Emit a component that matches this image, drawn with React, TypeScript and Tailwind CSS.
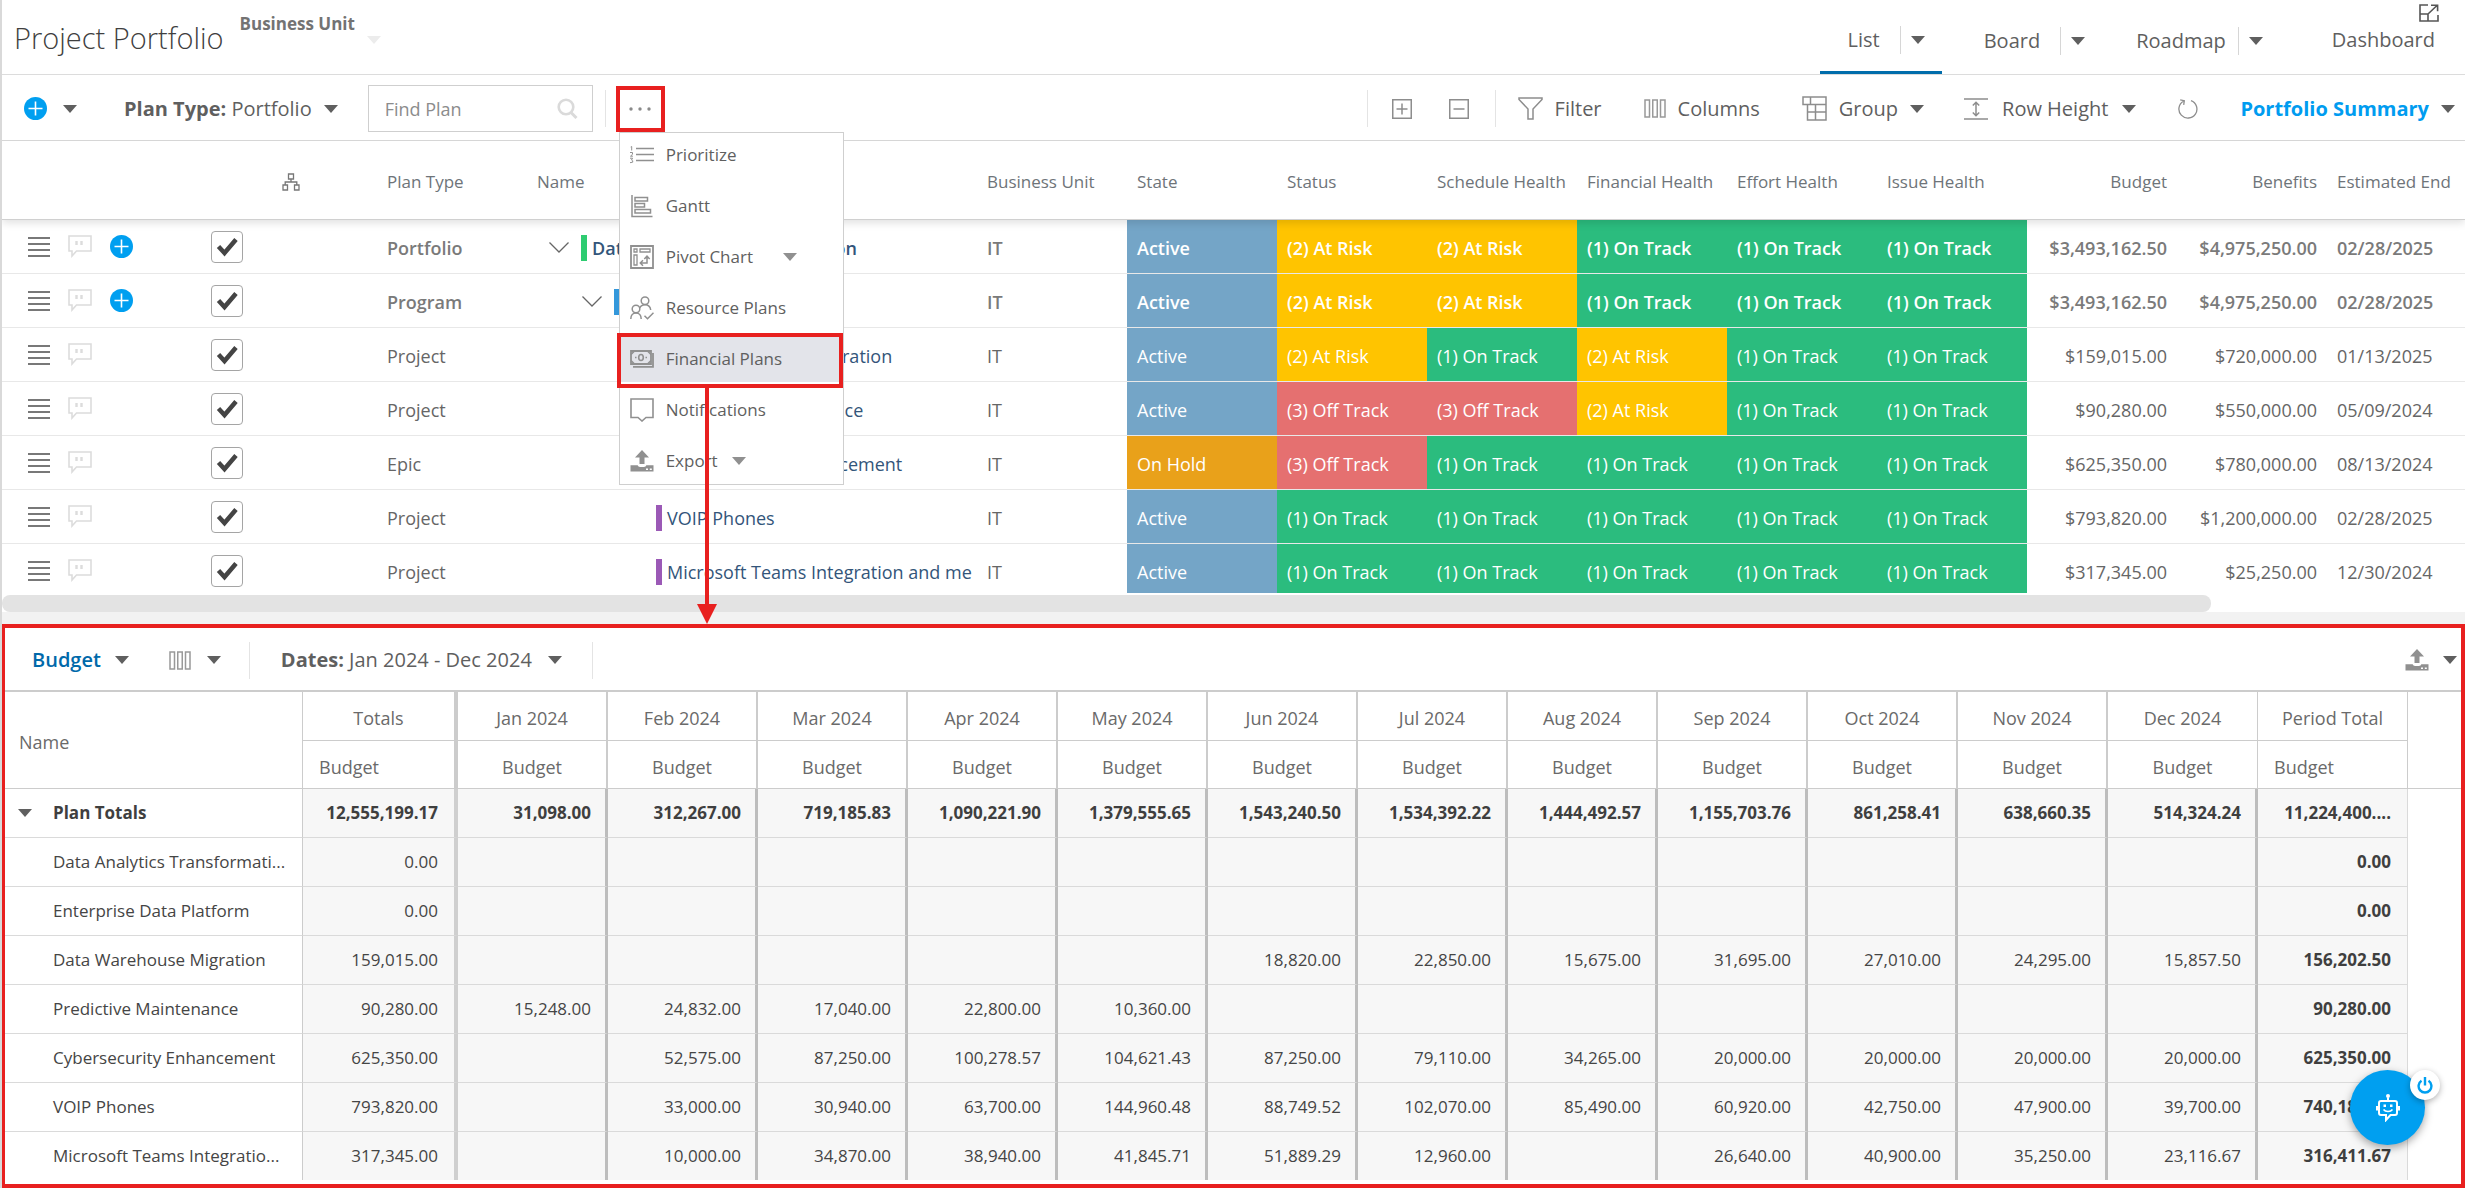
import React from "react";

type IconProps = { className?: string };

const Caret = ({ className = "text-[#5f5f5f]" }: IconProps) => (
  <svg width="14" height="8" viewBox="0 0 14 8" className={"shrink-0 " + className} aria-hidden="true">
    <path d="M0 0h14L7 8z" fill="currentColor" />
  </svg>
);

const PlusCircle = () => (
  <svg width="23" height="23" viewBox="0 0 23 23" className="shrink-0" aria-hidden="true">
    <circle cx="11.5" cy="11.5" r="11.5" fill="#009ff0" />
    <path d="M11.5 4.5v14M4.5 11.5h14" stroke="#fff" strokeWidth="1.6" />
  </svg>
);

const SearchIcon = () => (
  <svg width="21" height="21" viewBox="0 0 21 21" fill="none" stroke="#dadada" strokeWidth="2.6" aria-hidden="true">
    <circle cx="9" cy="9" r="7.3" />
    <path d="M14 14.5l5.5 5.5" strokeWidth="3" />
  </svg>
);

const ExpandIcon = () => (
  <svg width="20" height="18" viewBox="0 0 20 18" fill="none" stroke="#555" strokeWidth="1.6" aria-hidden="true">
    <path d="M9 1H1v16h18v-6M1 10h8v7M9 10l9-8.5M12 1.2h6.6v6" />
  </svg>
);

const BoxIcon = ({ plus }: { plus?: boolean }) => (
  <svg width="20" height="20" viewBox="0 0 20 20" fill="none" stroke="#8d8d8d" aria-hidden="true">
    <rect x="0.75" y="0.75" width="18.5" height="18.5" strokeWidth="1.5" />
    <path d={plus ? "M10 4.5v11M4.5 10h11" : "M4.5 10h11"} strokeWidth="1.5" />
  </svg>
);

const FilterIcon = () => (
  <svg width="25" height="23" viewBox="0 0 25 23" fill="none" stroke="#8d8d8d" strokeWidth="1.5" aria-hidden="true">
    <path d="M1 1h23v1.5L15 12v10h-5V12L1 2.5z" />
  </svg>
);

const ColumnsIcon = () => (
  <svg width="22" height="19" viewBox="0 0 22 19" fill="none" stroke="#999" strokeWidth="1.5" aria-hidden="true">
    <path d="M1 1h4.5v17H1zM8.75 1h4.5v17h-4.5zM16.5 1H21v17h-4.5z" />
  </svg>
);

const GroupIcon = () => (
  <svg width="25" height="25" viewBox="0 0 25 25" fill="none" stroke="#8d8d8d" strokeWidth="1.5" aria-hidden="true">
    <path d="M1 1h23v23H5.5V8.5H1zM8.5 1v7.5M5.5 8.5H24M5.5 16H24M13.5 8.5V24" />
  </svg>
);

const RowHeightIcon = () => (
  <svg width="24" height="22" viewBox="0 0 24 22" fill="none" stroke="#8d8d8d" strokeWidth="1.5" aria-hidden="true">
    <path d="M0 1h24M0 21h24M12 4.5v13M8.8 7.5L12 4.3l3.2 3.2M8.8 14.5l3.2 3.2 3.2-3.2" />
  </svg>
);

const RefreshIcon = () => (
  <svg width="20" height="21" viewBox="0 0 20 21" fill="none" stroke="#8d8d8d" strokeWidth="1.3" aria-hidden="true">
    <path d="M13 2.6a9 9 0 1 1-7.5.6M2.2 1.8l4.1.9-.6 4.2" />
  </svg>
);

const HierarchyIcon = () => (
  <svg width="18" height="18" viewBox="0 0 18 18" fill="none" stroke="#777" strokeWidth="1.3" aria-hidden="true">
    <path d="M6.5 1h5v5h-5zM1 12h4.5v5H1zM12.5 12H17v5h-4.5zM9 6v3M3.2 12V9h11.6v3" />
  </svg>
);

const RowsIcon = () => (
  <svg width="22" height="20" viewBox="0 0 22 20" stroke="#4c4c4c" strokeWidth="1.7" aria-hidden="true">
    <path d="M0 1h22M0 7h22M0 13h22M0 19h22" />
  </svg>
);

const CommentIcon = () => (
  <svg width="24" height="23" viewBox="0 0 24 23" fill="none" stroke="#dcdcdc" strokeWidth="1.6" aria-hidden="true">
    <path d="M1 1h22v15H8.5L4 21v-5H1z" />
    <path d="M8.5 6v4M13.5 6v4" strokeWidth="2.4" />
  </svg>
);

const ChevronDown = () => (
  <svg width="20" height="11" viewBox="0 0 20 11" fill="none" stroke="#666" strokeWidth="1.3" aria-hidden="true">
    <path d="M0.5 0.5L10 10l9.5-9.5" />
  </svg>
);

const UploadIcon = () => (
  <svg width="24" height="22" viewBox="0 0 24 22" fill="#909090" aria-hidden="true">
    <path d="M12 0l7 7.5h-4.5V14h-5V7.5H5z" />
    <path d="M0.5 15.2h7.2c.6 1.5 1.6 1.8 4.3 1.8s3.700-.3 4.300-1.800h7.200V21.500H.5z" />
    <path d="M16 18.500h2v1.500h-2zM19.800 18.500h2v1.500h-2z" fill="#fff" />
  </svg>
);

const PrioritizeIcon = () => (
  <svg width="24" height="18" viewBox="0 0 24 18" fill="none" stroke="#909090" aria-hidden="true">
    <path d="M6 2.500h18M6 8.500h18M6 14.500h18" strokeWidth="1.600" />
    <path d="M0.700 1l1-.5V4.500M0 6.500h2.500v1.800L.5 10.200h2.400M0 12.200h2.600L1.500 14l1.200.8v1.400L0 16.700" strokeWidth="1" />
  </svg>
);

const GanttIcon = () => (
  <svg width="24" height="24" viewBox="0 0 24 24" fill="none" stroke="#909090" strokeWidth="1.500" aria-hidden="true">
    <path d="M2 1v21.500h20.500M5 3.500h12.500v3.500H5zM5 9.500h9.500V13H5zM5 15.500h15.500V19H5z" />
  </svg>
);

const PivotIcon = () => (
  <svg width="24" height="24" viewBox="0 0 24 24" fill="none" stroke="#909090" strokeWidth="1.500" aria-hidden="true">
    <path d="M1 1h22v22H1z" strokeWidth="1.800" />
    <path d="M4 4h3v3H4zM10 4h10v3H10zM4 10h3v10H4z" strokeWidth="1.300" />
    <path d="M10.500 18H17V11.500M13 15.300L10.300 18l2.700 2.700M14.300 14L17 11.200l2.700 2.800" />
  </svg>
);

const PeopleIcon = () => (
  <svg width="24" height="24" viewBox="0 0 24 24" fill="none" stroke="#909090" strokeWidth="1.500" aria-hidden="true">
    <circle cx="15" cy="4.700" r="3.800" />
    <circle cx="6" cy="13" r="3.800" />
    <path d="M.8 23c0-3.700 2.200-6 5.200-6s5.200 2.300 5.200 6M9.700 12c1-2.100 2.900-3.300 5.300-3.300 3.400 0 5.300 2 5.700 5.300M14.500 19.800l3 3 6-6" />
  </svg>
);

const MoneyIcon = () => (
  <svg width="24" height="18" viewBox="0 0 24 18" fill="none" stroke="#909090" aria-hidden="true">
    <path d="M1 1h20v13H1zM3 16.800h20V3" strokeWidth="1.800" />
    <path d="M1 4.500L4.500 1M17.500 1L21 4.500M1 10.500L4.500 14M17.500 14l3.500-3.500" strokeWidth="1.600" />
    <ellipse cx="11" cy="7.500" rx="2.300" ry="3" strokeWidth="1.600" />
    <path d="M5 7.500h1.500M15.500 7.500H17" strokeWidth="1.600" />
  </svg>
);

const BubbleIcon = () => (
  <svg width="24" height="24" viewBox="0 0 24 24" fill="none" stroke="#909090" strokeWidth="1.600" aria-hidden="true">
    <path d="M1 1h22v18.500h-7L12 23l-4-3.500H1z" />
  </svg>
);

const BotIcon = () => (
  <svg width="24" height="28" viewBox="0 0 24 28" fill="none" stroke="#fff" strokeWidth="2" aria-hidden="true">
    <path d="M5 7h14a2 2 0 0 1 2 2v10a2 2 0 0 1-2 2h-4.500L10 26v-5H5a2 2 0 0 1-2-2V9a2 2 0 0 1 2-2zM12 7V3.500" />
    <path d="M1 12v4.500M23 12v4.500" />
    <path d="M7.500 15.500c2 2.600 7 2.600 9 0" strokeWidth="1.600" />
    <circle cx="12" cy="2" r="2" fill="#fff" stroke="none" />
    <path d="M7.500 10.500h2.500v2.500H7.500zM14 10.500h2.500v2.500H14z" fill="#fff" stroke="none" />
  </svg>
);

const PowerIcon = () => (
  <svg width="16" height="17" viewBox="0 0 16 17" fill="none" stroke="#009ff0" strokeWidth="2.400" aria-hidden="true">
    <path d="M4.500 3.800a6.400 6.400 0 1 0 7 0M8 0v8.500" />
  </svg>
);

const Divider = ({ className = "" }: IconProps) => <span className={"h-[37px] w-px shrink-0 bg-[#e4e4e4] " + className} />;

function Header() {
  const tabs = [
    { label: "Board", left: "pl-[42px]", gap: "ml-5" },
    { label: "Roadmap", left: "pl-[51px]", gap: "ml-3" },
  ];
  return (
    <header className="relative flex h-[75px] shrink-0 items-stretch border-b border-[#dcdcdc]">
      <h1 className="pt-[18px] pl-3 text-[29px] leading-10 font-light text-[#3f3f3f]">Project Portfolio</h1>
      <button className="flex items-start gap-3 pt-3 pl-4">
        <span className="text-[17px] leading-6 font-bold text-[#737373]">Business Unit</span>
        <Caret className="mt-6 text-[#ececec]" />
      </button>
      <nav className="ml-auto flex text-xl text-[#5f5f5f]">
        <div className="flex items-center border-b-[3px] border-[#006dab] pt-2 pr-[17px] pl-7">
          <button>List</button>
          <span className="ml-5 h-7 w-px bg-[#d6d6d6]" />
          <button aria-label="List options" className="ml-2.5"><Caret /></button>
        </div>
        {tabs.map((t) => (
          <div key={t.label} className={"flex items-center pt-2 " + t.left}>
            <button>{t.label}</button>
            <span className={"h-7 w-px bg-[#d6d6d6] " + t.gap} />
            <button aria-label={t.label + " options"} className="ml-2.5"><Caret /></button>
          </div>
        ))}
        <button className="pt-1.5 pr-[30px] pl-[69px]">Dashboard</button>
      </nav>
      <button aria-label="Expand" className="absolute top-1 right-[26px]"><ExpandIcon /></button>
    </header>
  );
}

const menuItems = [
  { label: "Prioritize", icon: <PrioritizeIcon /> },
  { label: "Gantt", icon: <GanttIcon /> },
  { label: "Pivot Chart", icon: <PivotIcon />, caret: "ml-[30px]" },
  { label: "Resource Plans", icon: <PeopleIcon /> },
  { label: "Financial Plans", icon: <MoneyIcon />, active: true },
  { label: "Notifications", icon: <BubbleIcon /> },
  { label: "Export", icon: <UploadIcon />, caret: "ml-3.5" },
];

function MoreMenu() {
  return (
    <div className="relative z-30 ml-2.5">
      <button aria-label="More actions" className="flex h-[46px] w-[49px] items-center justify-center border-4 border-[#e8201f] bg-white">
        <svg width="22" height="4" viewBox="0 0 22 4" fill="#8a8a8a" aria-hidden="true">
          <circle cx="2" cy="2" r="1.700" />
          <circle cx="11" cy="2" r="1.700" />
          <circle cx="20" cy="2" r="1.700" />
        </svg>
      </button>
      <ul className="absolute top-[46px] left-[3px] -z-10 flex w-[225px] flex-col gap-1.5 border border-[#cfcfcf] bg-white">
        {menuItems.map((m) => (
          <li key={m.label} className="relative">
            <button className={"flex h-[45px] w-full items-center pl-2.5 text-left text-[17px] text-[#5f5f5f] " + (m.active ? "bg-[#e3e4ea]" : "")}>
              <span className="flex w-9 shrink-0">{m.icon}</span>
              {m.label}
              {m.caret && <Caret className={"text-[#909090] " + m.caret} />}
            </button>
            {m.active && (
              <div className="pointer-events-none absolute -top-1 right-0 -bottom-1.5 -left-[3px] z-10 border-4 border-[#e8201f]">
                <svg width="20" height="240" viewBox="0 0 20 240" className="absolute top-full left-[76px]" fill="#e8201f" aria-hidden="true">
                  <path d="M8 0h4v220h8l-10 20L0 220h8z" />
                </svg>
              </div>
            )}
          </li>
        ))}
      </ul>
    </div>
  );
}

function Toolbar() {
  return (
    <div className="flex h-[66px] shrink-0 items-center border-b border-[#d6d6d6] pt-0.5 text-xl text-[#5f5f5f]">
      <button aria-label="Add plan" className="ml-[22px]"><PlusCircle /></button>
      <button aria-label="Add options" className="ml-4"><Caret /></button>
      <button className="ml-[47px] flex items-center gap-3">
        <span><b>Plan Type:</b> Portfolio</span>
        <Caret />
      </button>
      <label className="ml-[30px] flex h-[47px] w-[225px] items-center border border-[#cfcfcf] pr-3.5 pl-4">
        <input aria-label="Find Plan" placeholder="Find Plan" className="min-w-0 flex-1 text-lg outline-none placeholder:text-[#8c8c8c]" />
        <SearchIcon />
      </label>
      <Divider className="ml-3" />
      <MoreMenu />
      <div className="ml-auto flex items-center">
        <Divider />
        <button aria-label="Expand all" className="ml-6"><BoxIcon plus /></button>
        <button aria-label="Collapse all" className="ml-[37px]"><BoxIcon /></button>
        <Divider className="ml-[26px]" />
        <button className="ml-[22px] flex items-center gap-3"><FilterIcon />Filter</button>
        <button className="ml-[42px] flex items-center gap-3"><ColumnsIcon />Columns</button>
        <button className="ml-[42px] flex items-center gap-3"><GroupIcon />Group<Caret /></button>
        <button className="ml-10 flex items-center gap-3.5"><RowHeightIcon />Row Height<Caret /></button>
        <button aria-label="Refresh" className="ml-[42px]"><RefreshIcon /></button>
        <button className="mr-2.5 ml-[42px] flex items-center gap-3 font-bold text-[#009cf0]">Portfolio Summary<Caret /></button>
      </div>
    </div>
  );
}

type Health = 1 | 2 | 3;
type Plan = {
  type: string;
  name: string;
  level: 0 | 1 | 2;
  bar: string;
  state: string;
  health: Health[];
  budget: string;
  benefits: string;
  end: string;
};

const plans: Plan[] = [
  { type: "Portfolio", name: "Data Analytics Transformation", level: 0, bar: "bg-[#2ecc71]", state: "Active", health: [2, 2, 1, 1, 1], budget: "$3,493,162.50", benefits: "$4,975,250.00", end: "02/28/2025" },
  { type: "Program", name: "Enterprise Data Platform", level: 1, bar: "bg-[#3498db]", state: "Active", health: [2, 2, 1, 1, 1], budget: "$3,493,162.50", benefits: "$4,975,250.00", end: "02/28/2025" },
  { type: "Project", name: "Data Warehouse Migration", level: 2, bar: "bg-[#9b59b6]", state: "Active", health: [2, 1, 2, 1, 1], budget: "$159,015.00", benefits: "$720,000.00", end: "01/13/2025" },
  { type: "Project", name: "Predictive Maintenance", level: 2, bar: "bg-[#9b59b6]", state: "Active", health: [3, 3, 2, 1, 1], budget: "$90,280.00", benefits: "$550,000.00", end: "05/09/2024" },
  { type: "Epic", name: "Cybersecurity Enhancement", level: 2, bar: "bg-[#9b59b6]", state: "On Hold", health: [3, 1, 1, 1, 1], budget: "$625,350.00", benefits: "$780,000.00", end: "08/13/2024" },
  { type: "Project", name: "VOIP Phones", level: 2, bar: "bg-[#9b59b6]", state: "Active", health: [1, 1, 1, 1, 1], budget: "$793,820.00", benefits: "$1,200,000.00", end: "02/28/2025" },
  { type: "Project", name: "Microsoft Teams Integration and me", level: 2, bar: "bg-[#9b59b6]", state: "Active", health: [1, 1, 1, 1, 1], budget: "$317,345.00", benefits: "$25,250.00", end: "12/30/2024" },
];

const healthText = { 1: "(1) On Track", 2: "(2) At Risk", 3: "(3) Off Track" };
const healthColor = { 1: "bg-[#2bbc7e]", 2: "bg-[#ffc400]", 3: "bg-[#e57070]" };
const indent = { 0: "pl-3", 1: "pl-[45px]", 2: "pl-[119px]" };

function PlanGrid() {
  const heads = ["Status", "Schedule Health", "Financial Health", "Effort Health", "Issue Health"];
  return (
    <section className="flex min-h-0 flex-[471] flex-col">
      <div className="mb-0.5 min-h-0 flex-1 overflow-hidden">
        <table className="w-full table-fixed border-separate border-spacing-0 text-lg whitespace-nowrap text-[#666]">
          <colgroup>
            <col className="w-[199px]" />
            <col className="w-[52px]" />
            <col className="w-[124px]" />
            <col className="w-[150px]" />
            <col className="w-[450px]" />
            {Array.from({ length: 9 }, (_, i) => <col key={i} className="w-[150px]" />)}
            <col />
          </colgroup>
          <thead className="relative z-10">
            <tr className="h-[79px] text-left text-[17px] text-[#6e7479] shadow-[0_3px_8px_rgba(0,0,0,0.12)] [&>th]:border-b [&>th]:border-[#d0d0d0] [&>th]:bg-white [&>th]:px-2.5 [&>th]:pt-1 [&>th]:font-normal">
              <th /><th />
              <th><span className="flex pl-[19px]"><HierarchyIcon /></span></th>
              <th>Plan Type</th>
              <th>Name</th>
              <th>Business Unit</th>
              <th>State</th>
              {heads.map((h) => <th key={h}>{h}</th>)}
              <th className="text-right">Budget</th>
              <th className="text-right">Benefits</th>
              <th>Estimated End</th>
            </tr>
          </thead>
          <tbody>
            {plans.map((p) => (
              <tr key={p.name} className={"h-[54px] [&>td]:border-b [&>td]:border-[#e8e8e8] [&>td]:px-2.5 [&>td]:pt-0.5 " + (p.level < 2 ? "font-semibold text-[#7a7a7a]" : "")}>
                <td className="!pt-0">
                  <div className="flex items-center gap-[18px] pl-4">
                    <button aria-label="Row menu"><RowsIcon /></button>
                    <button aria-label="Comments"><CommentIcon /></button>
                    {p.level < 2 && <button aria-label="Add child"><PlusCircle /></button>}
                  </div>
                </td>
                <td className="!pt-0">
                  <label className="relative flex size-8">
                    <input type="checkbox" defaultChecked aria-label={"Select " + p.name} className="peer size-8 appearance-none rounded-sm border border-[#a5a5a5] bg-white" />
                    <svg viewBox="0 0 32 32" className="pointer-events-none absolute inset-0 hidden peer-checked:block" fill="none" stroke="#444" strokeWidth="4.500" aria-hidden="true">
                      <path d="M7.500 15.500l6 6.500L25 8.500" />
                    </svg>
                  </label>
                </td>
                <td />
                <td>{p.type}</td>
                <td>
                  <div className={"-mr-2 flex items-center overflow-hidden " + indent[p.level]}>
                    {p.level < 2 && <button aria-label="Collapse" className="mr-3 flex shrink-0"><ChevronDown /></button>}
                    <span className={"mr-[5px] h-[26px] w-1.5 shrink-0 " + p.bar} />
                    <a href="#plan" className="text-[#33557a]">{p.name}</a>
                  </div>
                </td>
                <td>IT</td>
                <td className={"text-white " + (p.state === "Active" ? "bg-[#74a5c7]" : "bg-[#e9a11a]")}>{p.state}</td>
                {p.health.map((h, k) => <td key={k} className={"text-white " + healthColor[h]}>{healthText[h]}</td>)}
                <td className="text-right">{p.budget}</td>
                <td className="text-right">{p.benefits}</td>
                <td>{p.end}</td>
              </tr>
            ))}
          </tbody>
        </table>
      </div>
      <div className="h-[17px] w-[89.7%] shrink-0 rounded-lg bg-[#e3e3e3]" />
    </section>
  );
}

const months = ["Jan", "Feb", "Mar", "Apr", "May", "Jun", "Jul", "Aug", "Sep", "Oct", "Nov", "Dec"];

const budgets = [
  ["Plan Totals", "12,555,199.17", "31,098.00", "312,267.00", "719,185.83", "1,090,221.90", "1,379,555.65", "1,543,240.50", "1,534,392.22", "1,444,492.57", "1,155,703.76", "861,258.41", "638,660.35", "514,324.24", "11,224,400...."],
  ["Data Analytics Transformati...", "0.00", "", "", "", "", "", "", "", "", "", "", "", "", "0.00"],
  ["Enterprise Data Platform", "0.00", "", "", "", "", "", "", "", "", "", "", "", "", "0.00"],
  ["Data Warehouse Migration", "159,015.00", "", "", "", "", "", "18,820.00", "22,850.00", "15,675.00", "31,695.00", "27,010.00", "24,295.00", "15,857.50", "156,202.50"],
  ["Predictive Maintenance", "90,280.00", "15,248.00", "24,832.00", "17,040.00", "22,800.00", "10,360.00", "", "", "", "", "", "", "", "90,280.00"],
  ["Cybersecurity Enhancement", "625,350.00", "", "52,575.00", "87,250.00", "100,278.57", "104,621.43", "87,250.00", "79,110.00", "34,265.00", "20,000.00", "20,000.00", "20,000.00", "20,000.00", "625,350.00"],
  ["VOIP Phones", "793,820.00", "", "33,000.00", "30,940.00", "63,700.00", "144,960.48", "88,749.52", "102,070.00", "85,490.00", "60,920.00", "42,750.00", "47,900.00", "39,700.00", "740,180.00"],
  ["Microsoft Teams Integratio...", "317,345.00", "", "10,000.00", "34,870.00", "38,940.00", "41,845.71", "51,889.29", "12,960.00", "", "26,640.00", "40,900.00", "35,250.00", "23,116.67", "316,411.67"],
];

function BudgetPanel() {
  return (
    <section className="relative -ml-px flex min-h-0 flex-[556] flex-col overflow-hidden border-4 border-[#e8201f] bg-white">
      <div className="flex h-[62px] shrink-0 items-center pt-0.5 text-xl text-[#5f5f5f]">
        <button className="ml-[27px] flex items-center gap-3.5 font-semibold text-[#0069aa]">Budget<Caret /></button>
        <button aria-label="Choose columns" className="ml-10 flex items-center gap-4"><ColumnsIcon /><Caret /></button>
        <Divider className="ml-7" />
        <button className="ml-[31px] flex items-center gap-4"><span><b>Dates:</b> Jan 2024 - Dec 2024</span><Caret /></button>
        <Divider className="ml-[30px]" />
        <button aria-label="Export" className="mr-1 ml-auto flex items-center gap-3.5"><UploadIcon /><Caret /></button>
      </div>
      <div className="mb-1 min-h-0 flex-1 overflow-hidden border-t-2 border-[#cccccc]">
        <table className="w-full table-fixed border-separate border-spacing-0 text-[17px] whitespace-nowrap text-[#454545]">
          <colgroup>
            <col className="w-[298px]" />
            <col className="w-[155px]" />
            {months.map((m) => <col key={m} className="w-[150px]" />)}
            <col className="w-[150px]" />
            <col />
          </colgroup>
          <thead className="text-lg text-[#6a6a6a] [&_th]:border-b [&_th]:border-[#cccccc] [&_th]:px-4 [&_th]:pt-1 [&_th]:font-normal">
            <tr className="h-[49px]">
              <th rowSpan={2} className="border-r !px-[14px] text-left">Name</th>
              <th className="border-r-4">Totals</th>
              {months.map((m) => <th key={m} className={m === "Dec" ? "border-r" : "border-r-2"}>{m} 2024</th>)}
              <th className="border-r !px-1">Period Total</th>
              <th rowSpan={2} />
            </tr>
            <tr className="h-12">
              <th className="border-r-4 text-left">Budget</th>
              {months.map((m) => <th key={m} className={m === "Dec" ? "border-r" : "border-r-2"}>Budget</th>)}
              <th className="border-r text-left">Budget</th>
            </tr>
          </thead>
          <tbody>
            {budgets.map((row, r) => (
              <tr key={row[0]} className={"h-[49px] [&>td]:border-b [&>td]:border-b-[#dadada] " + (r === 0 ? "font-bold text-[#3f3f3f]" : "")}>
                <td className="border-r border-r-[#cccccc]">
                  <div className="flex items-center">
                    <span className="flex w-12 shrink-0 pl-[13px]">
                      {r === 0 && <button aria-label="Collapse totals"><Caret /></button>}
                    </span>
                    {row[0]}
                  </div>
                </td>
                {row.slice(1).map((v, c) => (
                  <td
                    key={c}
                    className={
                      "bg-[#f7f7f7] text-right " +
                      (c === 0
                        ? "border-r-4 border-r-[#cfcfcf] px-4"
                        : c === 13
                          ? "border-r border-r-[#dadada] px-4 font-bold text-[#3f3f3f]"
                          : "border-r-[3px] border-r-[#bdbdbd] px-3.5")
                    }
                  >
                    {v}
                  </td>
                ))}
                <td className="!border-b-0" />
              </tr>
            ))}
          </tbody>
        </table>
      </div>
      <div className="absolute right-9 bottom-[39px]">
        <button aria-label="Open assistant" className="flex size-[75px] items-center justify-center rounded-full bg-[#009ff0] shadow-[0_3px_8px_rgba(0,0,0,0.35)]"><BotIcon /></button>
        <button aria-label="Turn off assistant" className="absolute top-0 -right-[15px] flex size-[30px] items-center justify-center rounded-full bg-white shadow-[0_2px_6px_rgba(0,0,0,0.3)]"><PowerIcon /></button>
      </div>
    </section>
  );
}

export default function App() {
  return (
    <div className="flex h-screen flex-col overflow-hidden border-l-2 border-[#d9d9d9] bg-white font-['Open_Sans',sans-serif]">
      <Header />
      <Toolbar />
      <PlanGrid />
      <div className="h-3 shrink-0 bg-[#f2f2f2]" />
      <BudgetPanel />
    </div>
  );
}
